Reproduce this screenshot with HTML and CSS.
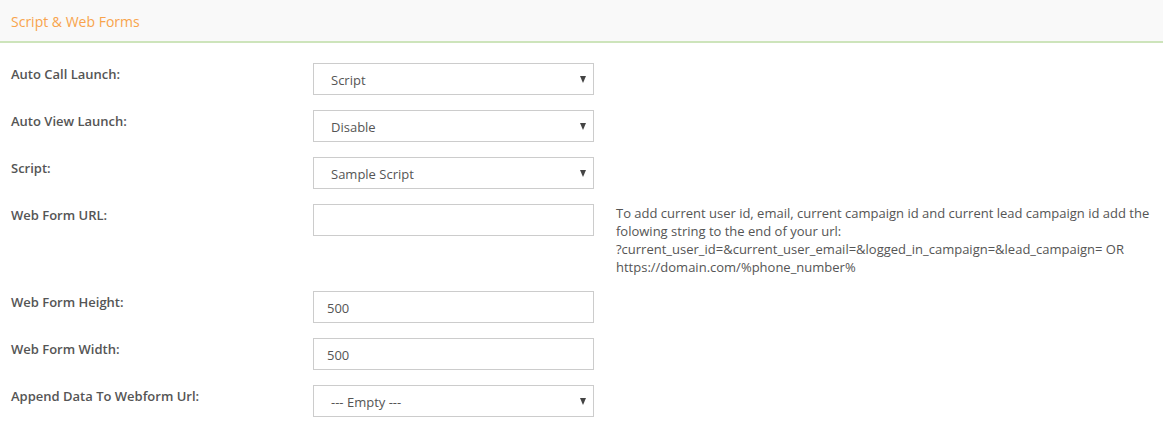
FILE: index.html
```html
<!DOCTYPE html>
<html lang="en">
<head>
  <meta charset="UTF-8" />
  <title>Script &amp; Web Forms</title>
  <link rel="stylesheet" href="styles.css">
</head>
<body>

<div class="panel">
  <div class="panel-heading">Script &amp; Web Forms</div>

  <div class="panel-body">
    <div class="form-row">
      <label>Auto Call Launch:</label>
      <div class="select-wrap">
        <select><option>Script</option></select>
      </div>
    </div>

    <div class="form-row">
      <label>Auto View Launch:</label>
      <div class="select-wrap">
        <select><option>Disable</option></select>
      </div>
    </div>

    <div class="form-row">
      <label>Script:</label>
      <div class="select-wrap">
        <select><option>Sample Script</option></select>
      </div>
    </div>

    <div class="form-row">
      <label>Web Form URL:</label>
      <input type="text" value="">
      <p class="help">To add current user id, email, current campaign id and current lead campaign id add the folowing string to the end of your url:<br>?current_user_id=&amp;current_user_email=&amp;logged_in_campaign=&amp;lead_campaign= OR<br>https://domain.com/%phone_number%</p>
    </div>

    <div class="form-row">
      <label>Web Form Height:</label>
      <input type="text" value="500">
    </div>

    <div class="form-row">
      <label>Web Form Width:</label>
      <input type="text" value="500">
    </div>

    <div class="form-row">
      <label>Append Data To Webform Url:</label>
      <div class="select-wrap">
        <select><option>--- Empty ---</option></select>
      </div>
    </div>
  </div>
</div>

</body>
</html>
```

FILE: styles.css
```css
:root {
  --text: rgb(85, 85, 85);
  --heading: rgb(248, 164, 76);
  --heading-bg: rgb(249, 249, 249);
  --heading-line: rgb(205, 228, 187);
  --border: rgb(204, 204, 204);
}

body {
  margin: 0;
  font-family: 'Open Sans', sans-serif;
  font-size: 13px;
  color: var(--text);
  background: #fff;
}

.panel-heading {
  background-color: var(--heading-bg);
  color: var(--heading);
  font-size: 14px;
  height: 41px;
  line-height: 43px;
  padding: 0 11px;
  border-bottom: 2px solid var(--heading-line);
}

.panel-body {
  padding: 20px 0 0 11px;
}

.form-row {
  display: flex;
  align-items: flex-start;
  margin-bottom: 15px;
}

.form-row label {
  width: 302px;
  font-weight: 600;
  padding-top: 2px;
  line-height: 18px;
}

.select-wrap {
  position: relative;
  width: 281px;
}

.select-wrap::after {
  content: '';
  position: absolute;
  right: 8px;
  top: 13px;
  border-left: 3.5px solid transparent;
  border-right: 3.5px solid transparent;
  border-top: 7px solid rgb(68, 68, 68);
  pointer-events: none;
}

select,
input {
  box-sizing: border-box;
  width: 281px;
  height: 32px;
  border: 1px solid var(--border);
  border-radius: 0;
  background: #fff;
  font-family: inherit;
  font-size: 13px;
  color: var(--text);
  margin: 0;
}

select {
  appearance: none;
  -webkit-appearance: none;
  padding: 1px 0 0 17px;
  line-height: 30px;
}

input {
  padding: 1px 13px 0;
}

.help {
  margin: 0 0 0 22px;
  width: 540px;
  line-height: 18px;
}
```
